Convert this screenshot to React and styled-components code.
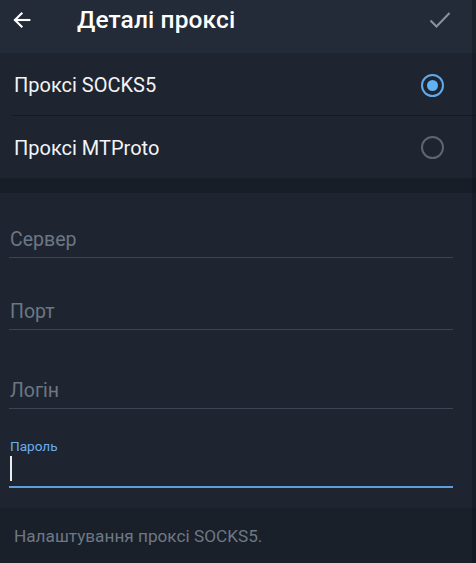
import React from "react";
import styled, { createGlobalStyle } from "styled-components";

const Global = createGlobalStyle`
  html, body { margin: 0; padding: 0; background: #1d2430; }
  body { font-family: Roboto, "Noto Sans", sans-serif; }
  * { box-sizing: border-box; }
`;

const Page = styled.div`
  width: 476px;
  height: 563px;
  display: flex;
  flex-direction: column;
  background: #1d2430;
  position: relative;
  overflow: hidden;
`;

const Header = styled.div`
  height: 53px;
  flex: none;
  display: flex;
  align-items: center;
  padding: 0 10px 0 10px;
  background: #232b38;
`;

const IconBtn = styled.div`
  width: 24px;
  height: 24px;
  display: flex;
  align-items: center;
  justify-content: center;
  flex: none;
  margin-top: -14px;
`;

const Title = styled.div`
  margin-left: 43px;
  flex: 1;
  color: #ffffff;
  font-size: 24.5px;
  font-weight: 500;
  letter-spacing: 0.1px;
  margin-top: -14px;
`;

const CheckWrap = styled.div`
  margin-right: 15px;
  margin-top: -14px;
  display: flex;
`;

const Options = styled.div`
  background: #1e2531;
  flex: none;
`;

const OptionRow = styled.div`
  height: ${(p) => p.h}px;
  display: flex;
  align-items: center;
  padding: 0 32px 0 14px;
  position: relative;
  ${(p) =>
    p.divider &&
    `&::after { content: ""; position: absolute; left: 12px; right: 0; bottom: 0; height: 1px; background: #151b23; }`}
`;

const OptionLabel = styled.div`
  flex: 1;
  color: #f2f4f6;
  font-size: 20px;
  margin-top: ${(p) => p.dy || 0}px;
`;

const Radio = styled.div`
  width: 23px;
  height: 23px;
  border-radius: 50%;
  border: 2px solid ${(p) => (p.checked ? "#62a9ea" : "#5c6570")};
  display: flex;
  align-items: center;
  justify-content: center;
  margin-top: ${(p) => p.dy || 0}px;
  &::before {
    content: "";
    display: ${(p) => (p.checked ? "block" : "none")};
    width: 11px;
    height: 11px;
    border-radius: 50%;
    background: #62b1f2;
  }
`;

const Shadow = styled.div`
  height: 15px;
  flex: none;
  background: #181e27;
`;

const Fields = styled.div`
  flex: none;
  height: 315px;
  padding: 0 23px 0 9px;
  display: flex;
  flex-direction: column;
  background: #1e2531;
`;

const Field = styled.div`
  height: ${(p) => p.h}px;
  display: flex;
  flex-direction: column;
  justify-content: flex-end;
  border-bottom: ${(p) => (p.active ? "2px solid #5d9fdc" : "1px solid #3b4654")};
`;

const Placeholder = styled.div`
  color: #6c7784;
  font-size: 19.5px;
  padding: 0 0 6px 1px;
`;

const SmallLabel = styled.div`
  color: #6aaef0;
  font-size: 13.6px;
  padding-left: 1px;
  margin-bottom: 2px;
`;

const Caret = styled.div`
  width: 2px;
  height: 25px;
  background: #e8ecf0;
  margin: 0 0 5px 1px;
`;

const Footer = styled.div`
  flex: 1;
  background: #19202a;
  padding: 18px 14px 0 14px;
  color: #6e7885;
  font-size: 17.2px;
`;

const EdgeStrip = styled.div`
  position: absolute;
  top: 0;
  right: 0;
  width: 4px;
  height: 100%;
  background: rgba(12, 16, 22, 0.35);
`;

export default function App() {
  return (
    <>
      <Global />
      <Page>
        <Header>
          <IconBtn>
            <svg width="22" height="22" viewBox="0 0 24 24" fill="none" stroke="#ffffff" strokeWidth="2.3" strokeLinecap="square">
              <path d="M20 12H4.5" />
              <path d="M11.5 4.8L4.3 12l7.2 7.2" />
            </svg>
          </IconBtn>
          <Title>Деталі проксі</Title>
          <CheckWrap>
            <svg width="22" height="20" viewBox="0 0 22 20" fill="none" stroke="#8a929c" strokeWidth="2">
              <path d="M1.5 10.5l6 6L20.5 3" />
            </svg>
          </CheckWrap>
        </Header>
        <Options>
          <OptionRow h={63} divider>
            <OptionLabel dy={1}>Проксі SOCKS5</OptionLabel>
            <Radio checked dy={1} />
          </OptionRow>
          <OptionRow h={62}>
            <OptionLabel dy={1}>Проксі MTProto</OptionLabel>
            <Radio />
          </OptionRow>
        </Options>
        <Shadow />
        <Fields>
          <Field h={65}>
            <Placeholder>Сервер</Placeholder>
          </Field>
          <Field h={72}>
            <Placeholder>Порт</Placeholder>
          </Field>
          <Field h={79}>
            <Placeholder>Логін</Placeholder>
          </Field>
          <Field h={79} active>
            <SmallLabel>Пароль</SmallLabel>
            <Caret />
          </Field>
        </Fields>
        <Footer>Налаштування проксі SOCKS5.</Footer>
        <EdgeStrip />
      </Page>
    </>
  );
}
